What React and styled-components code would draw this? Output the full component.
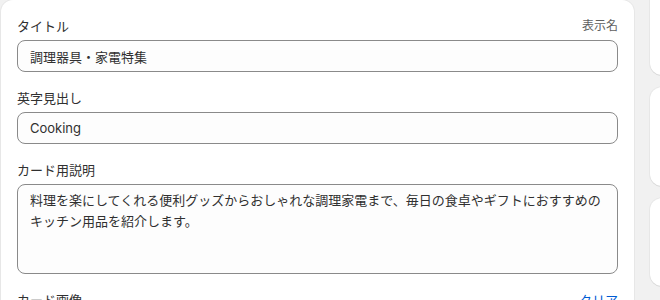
import React from "react";
import styled, { createGlobalStyle } from "styled-components";

const Global = createGlobalStyle`
  html, body {
    margin: 0;
    padding: 0;
    background: #f1f1f1;
    overflow: hidden;
  }
  body {
    font-family: "Inter", "Noto Sans CJK JP", sans-serif;
    color: #303030;
    -webkit-font-smoothing: antialiased;
  }
`;

const Page = styled.div`
  display: flex;
  align-items: flex-start;
  gap: 16px;
  padding-left: 1px;
  width: 720px;
`;

const MainCard = styled.section`
  flex: 0 0 633px;
  box-sizing: border-box;
  background: #ffffff;
  border-radius: 12px;
  box-shadow: 0 0 0 1px rgba(0, 0, 0, 0.04), 0 1px 0 rgba(26, 26, 26, 0.07);
  padding: 16px 16px 120px;
  display: flex;
  flex-direction: column;
  gap: 16px;
`;

const Field = styled.div`
  display: flex;
  flex-direction: column;
  gap: 4px;
`;

const LabelRow = styled.div`
  display: flex;
  justify-content: space-between;
  align-items: center;
  height: 20px;
`;

const Label = styled.label`
  font-size: 13px;
  line-height: 20px;
  color: #303030;
`;

const Hint = styled.span`
  font-size: 12px;
  line-height: 20px;
  color: #616161;
`;

const Link = styled.a`
  font-size: 13px;
  line-height: 20px;
  color: #005bd3;
  text-decoration: none;
  cursor: pointer;
`;

const TextInput = styled.input`
  box-sizing: border-box;
  width: 100%;
  height: 32px;
  margin: 0;
  padding: 0 12px;
  border: 1px solid #8a8a8a;
  border-radius: 8px;
  background: #fdfdfd;
  font-family: inherit;
  font-size: 13px;
  color: #303030;
  outline: none;
`;

const TextArea = styled.textarea`
  box-sizing: border-box;
  display: block;
  width: 100%;
  height: 90px;
  margin: 0;
  padding: 5px 12px;
  border: 1px solid #8a8a8a;
  border-radius: 8px;
  background: #fdfdfd;
  font-family: inherit;
  font-size: 13px;
  line-height: 21px;
  color: #303030;
  resize: none;
  outline: none;
  overflow: hidden;
`;

const SideColumn = styled.aside`
  flex: 1;
  display: flex;
  flex-direction: column;
  gap: 12px;
  margin-top: -28px;
`;

const SideCard = styled.div`
  height: ${(p) => p.$h}px;
  background: #ffffff;
  border-radius: 12px;
  box-shadow: 0 0 0 1px rgba(0, 0, 0, 0.04), 0 1px 0 rgba(26, 26, 26, 0.07);
`;

const fields = [
  { label: "タイトル", hint: "表示名", value: "調理器具・家電特集" },
  { label: "英字見出し", value: "Cooking" },
];

export default function App() {
  return (
    <>
      <Global />
      <Page>
        <MainCard>
          {fields.map((f) => (
            <Field key={f.label}>
              <LabelRow>
                <Label>{f.label}</Label>
                {f.hint && <Hint>{f.hint}</Hint>}
              </LabelRow>
              <TextInput readOnly defaultValue={f.value} />
            </Field>
          ))}
          <Field>
            <LabelRow>
              <Label>カード用説明</Label>
            </LabelRow>
            <TextArea
              readOnly
              defaultValue="料理を楽にしてくれる便利グッズからおしゃれな調理家電まで、毎日の食卓やギフトにおすすめのキッチン用品を紹介します。"
            />
          </Field>
          <Field>
            <LabelRow>
              <Label>カード画像</Label>
              <Link>クリア</Link>
            </LabelRow>
          </Field>
        </MainCard>
        <SideColumn>
          <SideCard $h={103} />
          <SideCard $h={99} />
          <SideCard $h={88} />
        </SideColumn>
      </Page>
    </>
  );
}
